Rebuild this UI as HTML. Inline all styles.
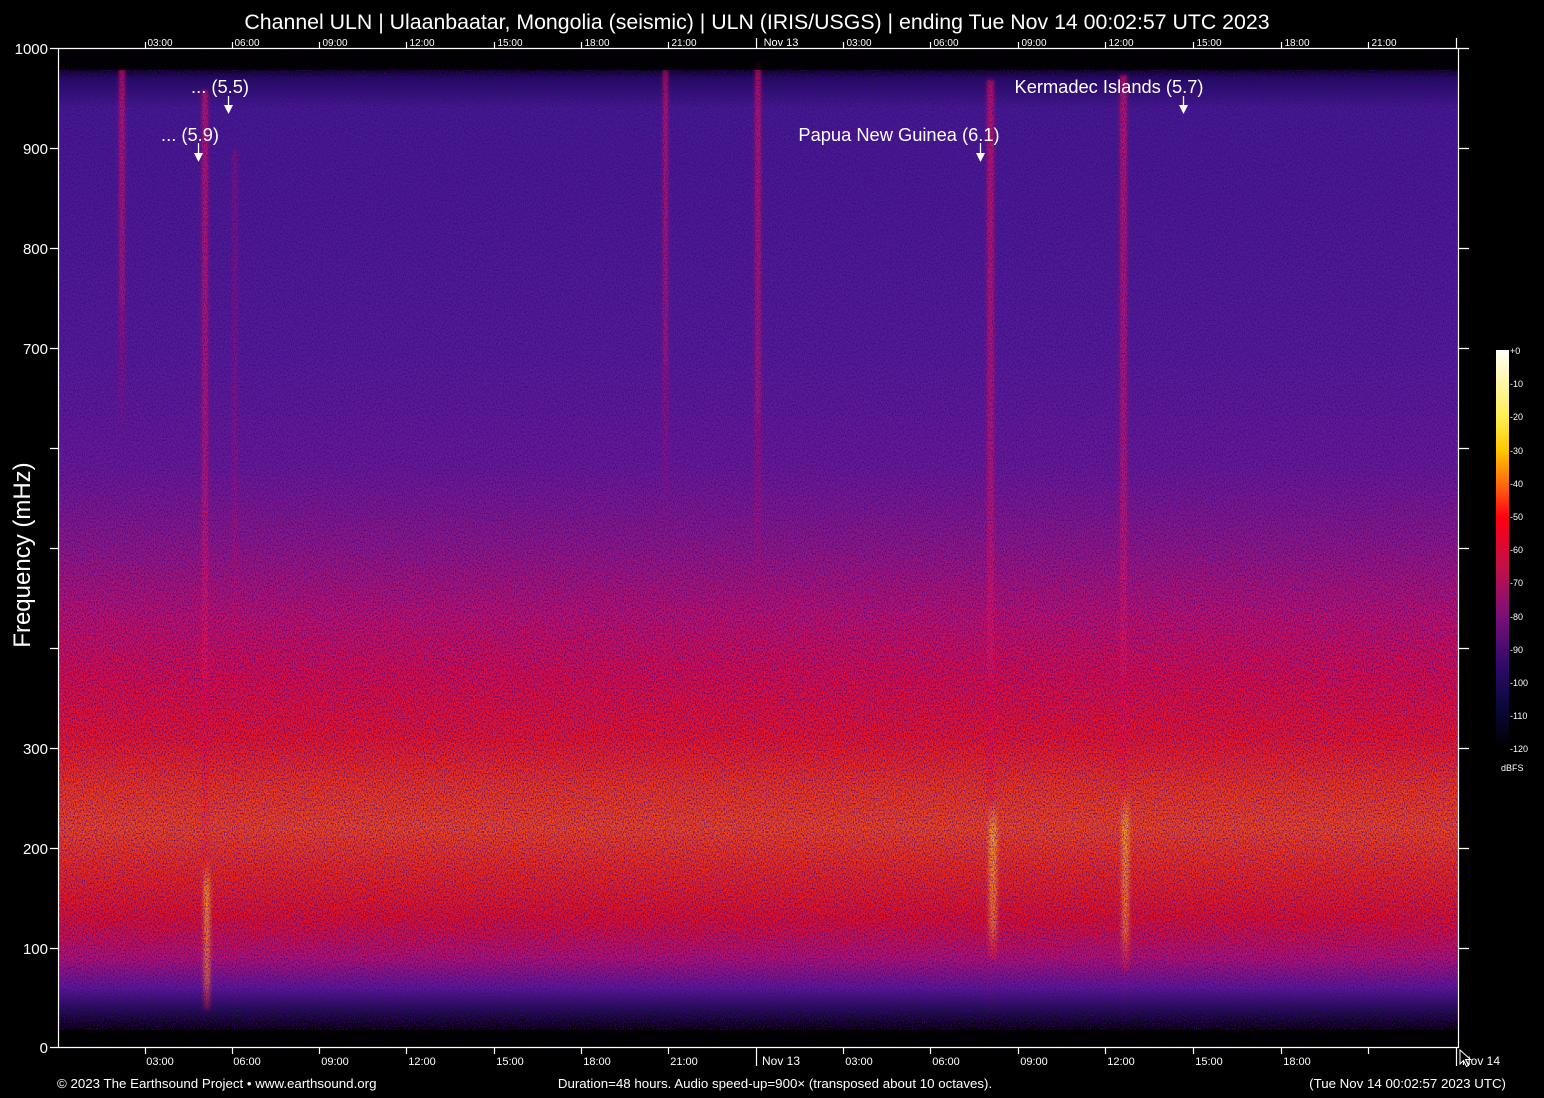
<!DOCTYPE html>
<html><head><style>
html,body{margin:0;padding:0;background:#000;}
svg{display:block;font-family:"Liberation Sans",Arial,sans-serif;}
</style></head><body>
<svg width="1544" height="1098" viewBox="0 0 1544 1098" xmlns="http://www.w3.org/2000/svg">
<defs>
<linearGradient id="bg" x1="0" y1="48" x2="0" y2="1048" gradientUnits="userSpaceOnUse">
<stop offset="0" stop-color="#000"/>
<stop offset="0.02" stop-color="#000"/>
<stop offset="0.03" stop-color="#1c0c58"/>
<stop offset="0.06" stop-color="#421c8c"/>
<stop offset="0.3" stop-color="#521e94"/>
<stop offset="0.42" stop-color="#681c92"/>
<stop offset="0.5" stop-color="#921a80"/>
<stop offset="0.57" stop-color="#c41464"/>
<stop offset="0.63" stop-color="#e01040"/>
<stop offset="0.69" stop-color="#f01820"/>
<stop offset="0.74" stop-color="#f53a14"/>
<stop offset="0.78" stop-color="#f64818"/>
<stop offset="0.82" stop-color="#f22c14"/>
<stop offset="0.87" stop-color="#e61222"/>
<stop offset="0.91" stop-color="#b8146a"/>
<stop offset="0.94" stop-color="#5c1a92"/>
<stop offset="0.96" stop-color="#20104e"/>
<stop offset="0.98" stop-color="#000"/>
<stop offset="1" stop-color="#000"/>
</linearGradient>
<linearGradient id="cb" x1="0" y1="350" x2="0" y2="748" gradientUnits="userSpaceOnUse">
<stop offset="0" stop-color="#fffff8"/>
<stop offset="0.17" stop-color="#ffee50"/>
<stop offset="0.25" stop-color="#ffc800"/>
<stop offset="0.35" stop-color="#ff5a10"/>
<stop offset="0.42" stop-color="#ff0010"/>
<stop offset="0.55" stop-color="#c0104a"/>
<stop offset="0.67" stop-color="#78107a"/>
<stop offset="0.8" stop-color="#2c0a66"/>
<stop offset="0.9" stop-color="#08083a"/>
<stop offset="1" stop-color="#000"/>
</linearGradient>
<linearGradient id="st" x1="0" y1="0" x2="0" y2="1">
<stop offset="0" stop-color="#ff1050" stop-opacity="0.7"/>
<stop offset="0.6" stop-color="#ff1050" stop-opacity="0.45"/>
<stop offset="1" stop-color="#ff1050" stop-opacity="0"/>
</linearGradient>
<linearGradient id="ye" x1="0" y1="0" x2="0" y2="1">
<stop offset="0" stop-color="#ffb020" stop-opacity="0"/>
<stop offset="0.2" stop-color="#ffb020" stop-opacity="0.85"/>
<stop offset="0.8" stop-color="#ff8020" stop-opacity="0.75"/>
<stop offset="1" stop-color="#ff2020" stop-opacity="0.3"/>
</linearGradient>
<filter id="nz" x="0" y="0" width="100%" height="100%">
<feTurbulence type="fractalNoise" baseFrequency="0.9 0.6" numOctaves="2" seed="3"/>
<feColorMatrix type="matrix" values="0 0 0 0 0.05  0 0 0 0 0  0 0 0 0 0.25  0 0 0 -2.2 1.3"/>
</filter>
<filter id="bl"><feGaussianBlur stdDeviation="1.8"/></filter>
</defs>
<rect width="1544" height="1098" fill="#000"/>
<rect x="58" y="48" width="1400" height="1000" fill="url(#bg)"/>
<g filter="url(#bl)">
<rect x="119" y="68" width="6" height="380" fill="url(#st)"/>
<rect x="202" y="90" width="6" height="940" fill="url(#st)"/>
<rect x="233" y="150" width="4" height="880" fill="url(#st)" opacity="0.5"/>
<rect x="663" y="70" width="5" height="470" fill="url(#st)"/>
<rect x="755" y="62" width="6" height="560" fill="url(#st)"/>
<rect x="987" y="80" width="7" height="950" fill="url(#st)"/>
<rect x="1120" y="75" width="7" height="955" fill="url(#st)"/>
<rect x="204" y="860" width="6" height="150" fill="url(#ye)"/>
<rect x="989" y="800" width="8" height="160" fill="url(#ye)"/>
<rect x="1122" y="790" width="7" height="180" fill="url(#ye)"/>
</g>
<rect x="58" y="48" width="1400" height="1000" filter="url(#nz)"/>
<rect x="58" y="48" width="1400" height="22" fill="#000" opacity="0.85"/>
<rect x="58" y="1030" width="1400" height="18" fill="#000" opacity="0.9"/>
<g stroke="#fff" stroke-width="1.2" fill="none">
<path d="M58.5 48V1048M58 48.5H1459M58 1047.5H1459M1458.5 48V1048"/>
<path d="M50 48.5H58M50 148.5H58M50 248.5H58M50 348.5H58M50 448.5H58M50 548.5H58M50 648.5H58M50 748.5H58M50 848.5H58M50 948.5H58M50 1047.5H58"/>
<path d="M1459 48.5H1469M1459 148.5H1469M1459 248.5H1469M1459 348.5H1469M1459 448.5H1469M1459 548.5H1469M1459 648.5H1469M1459 748.5H1469M1459 848.5H1469M1459 948.5H1469"/>
<path d="M145.5 42V48M232.5 42V48M319.5 42V48M406.5 42V48M494.5 42V48M581.5 42V48M668.5 42V48M756.5 38V48M843.5 42V48M930.5 42V48M1018.5 42V48M1105.5 42V48M1193.5 42V48M1281.5 42V48M1368.5 42V48M1456.5 38V48"/>
<path d="M145.5 1048V1054M232.5 1048V1054M319.5 1048V1054M406.5 1048V1054M494.5 1048V1054M581.5 1048V1054M668.5 1048V1054M756.5 1048V1066M843.5 1048V1054M930.5 1048V1054M1018.5 1048V1054M1105.5 1048V1054M1193.5 1048V1054M1281.5 1048V1054M1368.5 1048V1054M1456.5 1048V1066"/>
</g>
<text x="757" y="29" fill="#fff" font-size="21.3" text-anchor="middle">Channel ULN | Ulaanbaatar, Mongolia (seismic) | ULN (IRIS/USGS) | ending Tue Nov 14 00:02:57 UTC 2023</text>
<g fill="#fff" font-size="10" text-anchor="middle">
<text x="160" y="46">03:00</text><text x="247" y="46">06:00</text><text x="335" y="46">09:00</text><text x="422" y="46">12:00</text><text x="510" y="46">15:00</text><text x="597" y="46">18:00</text><text x="684" y="46">21:00</text><text x="781" y="46" font-size="11">Nov 13</text><text x="859" y="46">03:00</text><text x="946" y="46">06:00</text><text x="1034" y="46">09:00</text><text x="1121" y="46">12:00</text><text x="1209" y="46">15:00</text><text x="1297" y="46">18:00</text><text x="1384" y="46">21:00</text>
</g>
<g fill="#fff" font-size="11" text-anchor="middle">
<text x="160" y="1065">03:00</text><text x="247" y="1065">06:00</text><text x="335" y="1065">09:00</text><text x="422" y="1065">12:00</text><text x="510" y="1065">15:00</text><text x="597" y="1065">18:00</text><text x="684" y="1065">21:00</text><text x="781" y="1065" font-size="12">Nov 13</text><text x="859" y="1065">03:00</text><text x="946" y="1065">06:00</text><text x="1034" y="1065">09:00</text><text x="1121" y="1065">12:00</text><text x="1209" y="1065">15:00</text><text x="1297" y="1065">18:00</text><text x="1481" y="1065" font-size="12">Nov 14</text>
</g>
<g fill="#fff" font-size="15" text-anchor="end">
<text x="48" y="54">1000</text><text x="48" y="154">900</text><text x="48" y="254">800</text><text x="48" y="354">700</text><text x="48" y="754">300</text><text x="48" y="854">200</text><text x="48" y="954">100</text><text x="48" y="1053">0</text>
</g>
<text transform="translate(30,555) rotate(-90)" fill="#fff" font-size="24" text-anchor="middle">Frequency (mHz)</text>
<g fill="#fff" font-size="18.3" text-anchor="middle">
<text x="220" y="93">... (5.5)</text><text x="190" y="141">... (5.9)</text>
<text x="899" y="141">Papua New Guinea (6.1)</text><text x="1109" y="93">Kermadec Islands (5.7)</text>
</g>
<g stroke="#fff" stroke-width="1.3"><path d="M228.5 96V106M198.5 143V154M980.5 143V154M1183.5 96V106"/></g>
<g fill="#fff"><path d="M224 105h9l-4.5 9zM194 153h9l-4.5 9zM976 153h9l-4.5 9zM1179 105h9l-4.5 9z"/></g>
<path d="M1460 1050l0 14 3.5-3.5 3 6 2-1-3-6 5 0z" fill="#000" stroke="#fff" stroke-width="1"/>
<rect x="1496" y="350" width="13" height="398" fill="url(#cb)"/>
<g fill="#fff" font-size="9">
<text x="1510" y="354">+0</text><text x="1510" y="387">-10</text><text x="1510" y="420">-20</text><text x="1510" y="454">-30</text><text x="1510" y="487">-40</text><text x="1510" y="520">-50</text><text x="1510" y="553">-60</text><text x="1510" y="586">-70</text><text x="1510" y="620">-80</text><text x="1510" y="653">-90</text><text x="1510" y="686">-100</text><text x="1510" y="719">-110</text><text x="1510" y="752">-120</text><text x="1501" y="771">dBFS</text>
</g>
<g fill="#fff" font-size="13.3">
<text x="57" y="1088">© 2023 The Earthsound Project • www.earthsound.org</text>
<text x="775" y="1088" text-anchor="middle">Duration=48 hours. Audio speed-up=900× (transposed about 10 octaves).</text>
<text x="1506" y="1088" text-anchor="end">(Tue Nov 14 00:02:57 2023 UTC)</text>
</g>
</svg>
</body></html>
